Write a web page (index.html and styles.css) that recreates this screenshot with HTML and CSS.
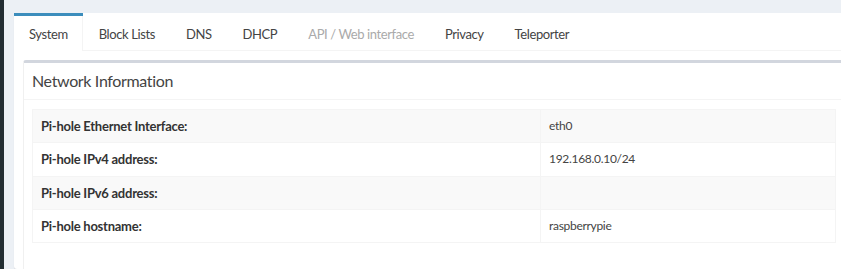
FILE: index.html
```html
<!DOCTYPE html>
<html lang="en">
<head>
    <meta charset="UTF-8">
    <meta name="viewport" content="width=device-width, initial-scale=1.0">
    <title>Pi-hole Settings</title>
    <link rel="stylesheet" href="styles.css">
</head>
<body>
    <div class="sidebar"></div>
    <div class="content">
        <div class="nav-tabs-custom">
            <ul class="nav-tabs">
                <li class="active"><a href="#system">System</a></li>
                <li><a href="#blocklists">Block Lists</a></li>
                <li><a href="#dns">DNS</a></li>
                <li><a href="#dhcp">DHCP</a></li>
                <li class="disabled"><a href="#api">API / Web interface</a></li>
                <li><a href="#privacy">Privacy</a></li>
                <li><a href="#teleporter">Teleporter</a></li>
            </ul>
            <div class="tab-content">
                <div class="box">
                    <div class="box-header">
                        <h3 class="box-title">Network Information</h3>
                    </div>
                    <div class="box-body">
                        <table class="table">
                            <tr>
                                <th>Pi-hole Ethernet Interface:</th>
                                <td>eth0</td>
                            </tr>
                            <tr>
                                <th>Pi-hole IPv4 address:</th>
                                <td>192.168.0.10/24</td>
                            </tr>
                            <tr>
                                <th>Pi-hole IPv6 address:</th>
                                <td></td>
                            </tr>
                            <tr>
                                <th>Pi-hole hostname:</th>
                                <td>raspberrypie</td>
                            </tr>
                        </table>
                    </div>
                </div>
            </div>
        </div>
    </div>
</body>
</html>
```

FILE: styles.css
```css
body {
    font-family: Lato, "Open Sans", sans-serif;
    font-size: 13px;
    color: #333;
    background-color: #ecf0f5;
    margin: 0;
    display: flex;
    height: 100vh;
    overflow: hidden;
}

.sidebar {
    width: 4px;
    flex-shrink: 0;
    background-color: #222d32;
}

.content {
    width: 860px;
    flex-shrink: 0;
    box-sizing: border-box;
    padding: 13px 10px 0 10px;
}

.nav-tabs-custom {
    background: white;
    border-radius: 3px;
    box-shadow: 0 1px 1px rgba(0, 0, 0, 0.1);
    height: 100%;
}

.nav-tabs {
    list-style: none;
    margin: 0;
    padding: 0;
    display: flex;
    gap: 1px;
    border-bottom: 1px solid #f4f4f4;
}

.nav-tabs li {
    border-top: 3px solid transparent;
    margin-bottom: -1px;
}

.nav-tabs a {
    display: block;
    padding: 10px 15px 9px 15px;
    line-height: 16px;
    color: #444;
    letter-spacing: -0.4px;
    text-decoration: none;
}

.nav-tabs li.active {
    border-top-color: #3c8dbc;
}

.nav-tabs li.active a {
    background: white;
    border-right: 1px solid #f4f4f4;
    padding-right: 14px;
}

.nav-tabs li.disabled a {
    color: #aaa;
}

.tab-content {
    padding: 9px;
}

.box {
    background: white;
    border: 1px solid #f0f0f0;
    border-top: 3px solid #d2d6de;
    border-radius: 3px;
    height: 300px;
}

.box-header {
    padding: 8px 8px 8px 8px;
    border-bottom: 1px solid #f4f4f4;
}

.box-title {
    margin: 0;
    font-size: 16px;
    font-weight: normal;
    line-height: 20px;
    letter-spacing: -0.35px;
    color: #444;
}

.box-body {
    padding: 9px 8px;
}

.table {
    width: 100%;
    border-collapse: collapse;
    border: 1px solid #f4f4f4;
}

.table th,
.table td {
    padding: 8px;
    line-height: 16.25px;
    border: 1px solid #f4f4f4;
    text-align: left;
}

.table th {
    width: 491px;
    color: #333;
    letter-spacing: -0.25px;
}

.table td {
    color: #444;
    font-size: 12px;
    letter-spacing: -0.3px;
}

.table tr:nth-child(odd) {
    background-color: #f9f9f9;
}
```
